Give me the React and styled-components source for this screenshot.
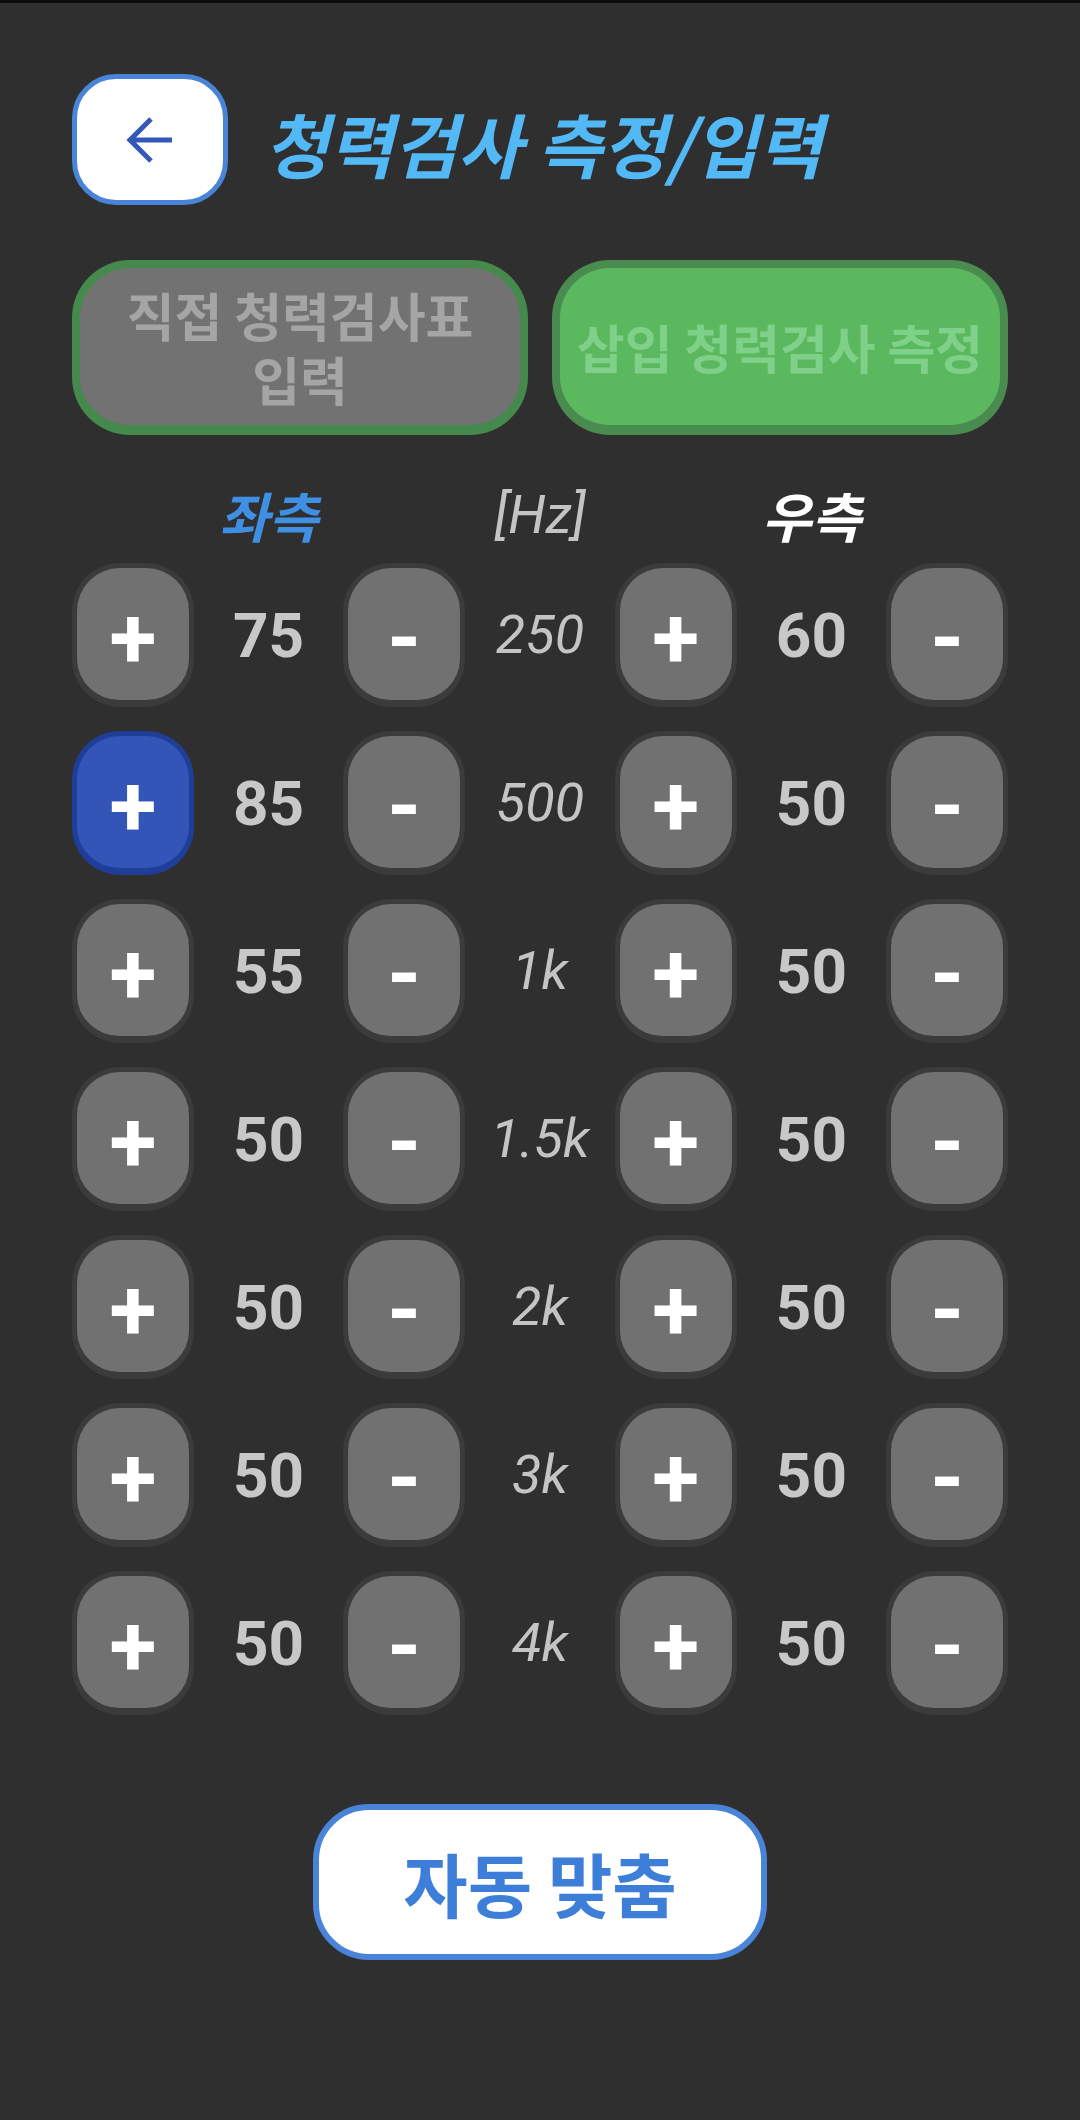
import React from 'react'
import styled, { createGlobalStyle } from 'styled-components'

const rows = [
  { left: 75, hz: '250', right: 60 },
  { left: 85, hz: '500', right: 50, active: true },
  { left: 55, hz: '1k', right: 50 },
  { left: 50, hz: '1.5k', right: 50 },
  { left: 50, hz: '2k', right: 50 },
  { left: 50, hz: '3k', right: 50 },
  { left: 50, hz: '4k', right: 50 },
]

const App = () => {
  return (
    <Page>
      <GlobalStyle />
      <Header>
        <BackButton aria-label="back">
          <svg width="48" height="48" viewBox="0 0 48 48" fill="none">
            <path d="M46 24 H4 M25 3 L4 24 L25 45" stroke="#3358b8" strokeWidth="5" />
          </svg>
        </BackButton>
        <Title>청력검사 측정/입력</Title>
      </Header>

      <ModeRow>
        <ModeButton>직접 청력검사표<br />입력</ModeButton>
        <ModeButton $on>삽입 청력검사 측정</ModeButton>
      </ModeRow>

      <Table>
        <LabelRow>
          <span />
          <Side $color="#3f8fe2">좌측</Side>
          <span />
          <Freq>[Hz]</Freq>
          <span />
          <Side $color="#ffffff">우측</Side>
          <span />
        </LabelRow>

        {rows.map((r) => (
          <Row key={r.hz}>
            <StepButton $active={r.active}>+</StepButton>
            <Value>{r.left}</Value>
            <StepButton>-</StepButton>
            <Freq>{r.hz}</Freq>
            <StepButton>+</StepButton>
            <Value>{r.right}</Value>
            <StepButton>-</StepButton>
          </Row>
        ))}
      </Table>

      <Footer>
        <AutoButton>자동 맞춤</AutoButton>
      </Footer>
    </Page>
  )
}
export default App

const GlobalStyle = createGlobalStyle`
  html, body {
    margin: 0;
    background: #2f2f2f;
  }
  body {
    font-family: Roboto, "Noto Sans CJK KR", "Noto Sans", sans-serif;
  }
`

const Page = styled.div`
  min-height: 2120px;
  box-sizing: border-box;
  border-top: 3px solid #0c0c0c;
  padding: 71px 72px 0;
  background: #2f2f2f;
`

const Header = styled.div`
  display: flex;
  align-items: center;
  gap: 36px;
  height: 131px;
`

const BackButton = styled.button`
  width: 156px;
  height: 131px;
  box-sizing: border-box;
  border: 5px solid #4a84d8;
  border-radius: 44px;
  background: #ffffff;
  display: flex;
  align-items: center;
  justify-content: center;
  padding: 0;
`

const Title = styled.h1`
  margin: 0;
  font-family: "Noto Sans CJK KR", sans-serif;
  font-size: 70px;
  font-weight: 700;
  font-style: italic;
  color: #53b8f6;
  line-height: 1;
  padding-top: 6px;
`

const ModeRow = styled.div`
  display: grid;
  grid-template-columns: 1fr 1fr;
  gap: 24px;
  margin-top: 55px;
`

const ModeButton = styled.div`
  height: 175px;
  box-sizing: border-box;
  border: 8px solid ${(p) => (p.$on ? '#4a8c50' : '#458a4c')};
  border-bottom-width: 10px;
  border-radius: 58px;
  background: ${(p) => (p.$on ? '#5cb85f' : '#727272')};
  color: ${(p) => (p.$on ? '#7fd088' : '#a5a5a5')};
  display: flex;
  align-items: center;
  justify-content: center;
  text-align: center;
  font-family: "Noto Sans CJK KR", sans-serif;
  font-weight: 700;
  font-size: 52px;
  line-height: 64px;
`

const Table = styled.div`
  display: flex;
  flex-direction: column;
  gap: 24px;
  margin-top: 50px;
`

const Row = styled.div`
  display: grid;
  grid-template-columns: repeat(7, 1fr);
  column-gap: 14px;
  align-items: center;
  justify-items: center;
`

const LabelRow = styled(Row)`
  height: 60px;
  margin-bottom: -6px;
`

const Side = styled.div`
  font-family: "Noto Sans CJK KR", sans-serif;
  font-size: 54px;
  font-weight: 700;
  font-style: italic;
  color: ${(p) => p.$color};
  line-height: 60px;
`

const StepButton = styled.button`
  width: 100%;
  height: 144px;
  box-sizing: border-box;
  border: 5px solid ${(p) => (p.$active ? '#1f3e98' : '#3b3b3b')};
  border-bottom-width: 7px;
  border-radius: 48px;
  background: ${(p) => (p.$active ? '#3355b8' : '#717171')};
  color: #ffffff;
  font-family: Roboto, sans-serif;
  font-size: 86px;
  font-weight: 700;
  line-height: 1;
  padding: 8px 0 0;
  display: flex;
  align-items: center;
  justify-content: center;
`

const Value = styled.div`
  font-size: 62px;
  font-weight: 700;
  color: #c8c8c8;
`

const Freq = styled.div`
  font-size: 54px;
  font-style: italic;
  color: #c4c4c4;
  line-height: 60px;
`

const Footer = styled.div`
  display: flex;
  justify-content: center;
  margin-top: 89px;
`

const AutoButton = styled.button`
  width: 454px;
  height: 156px;
  box-sizing: border-box;
  border: 6px solid #4a84d8;
  border-radius: 56px;
  background: #ffffff;
  color: #3d7fd8;
  font-family: "Noto Sans CJK KR", sans-serif;
  font-size: 70px;
  font-weight: 700;
  padding: 0;
`
